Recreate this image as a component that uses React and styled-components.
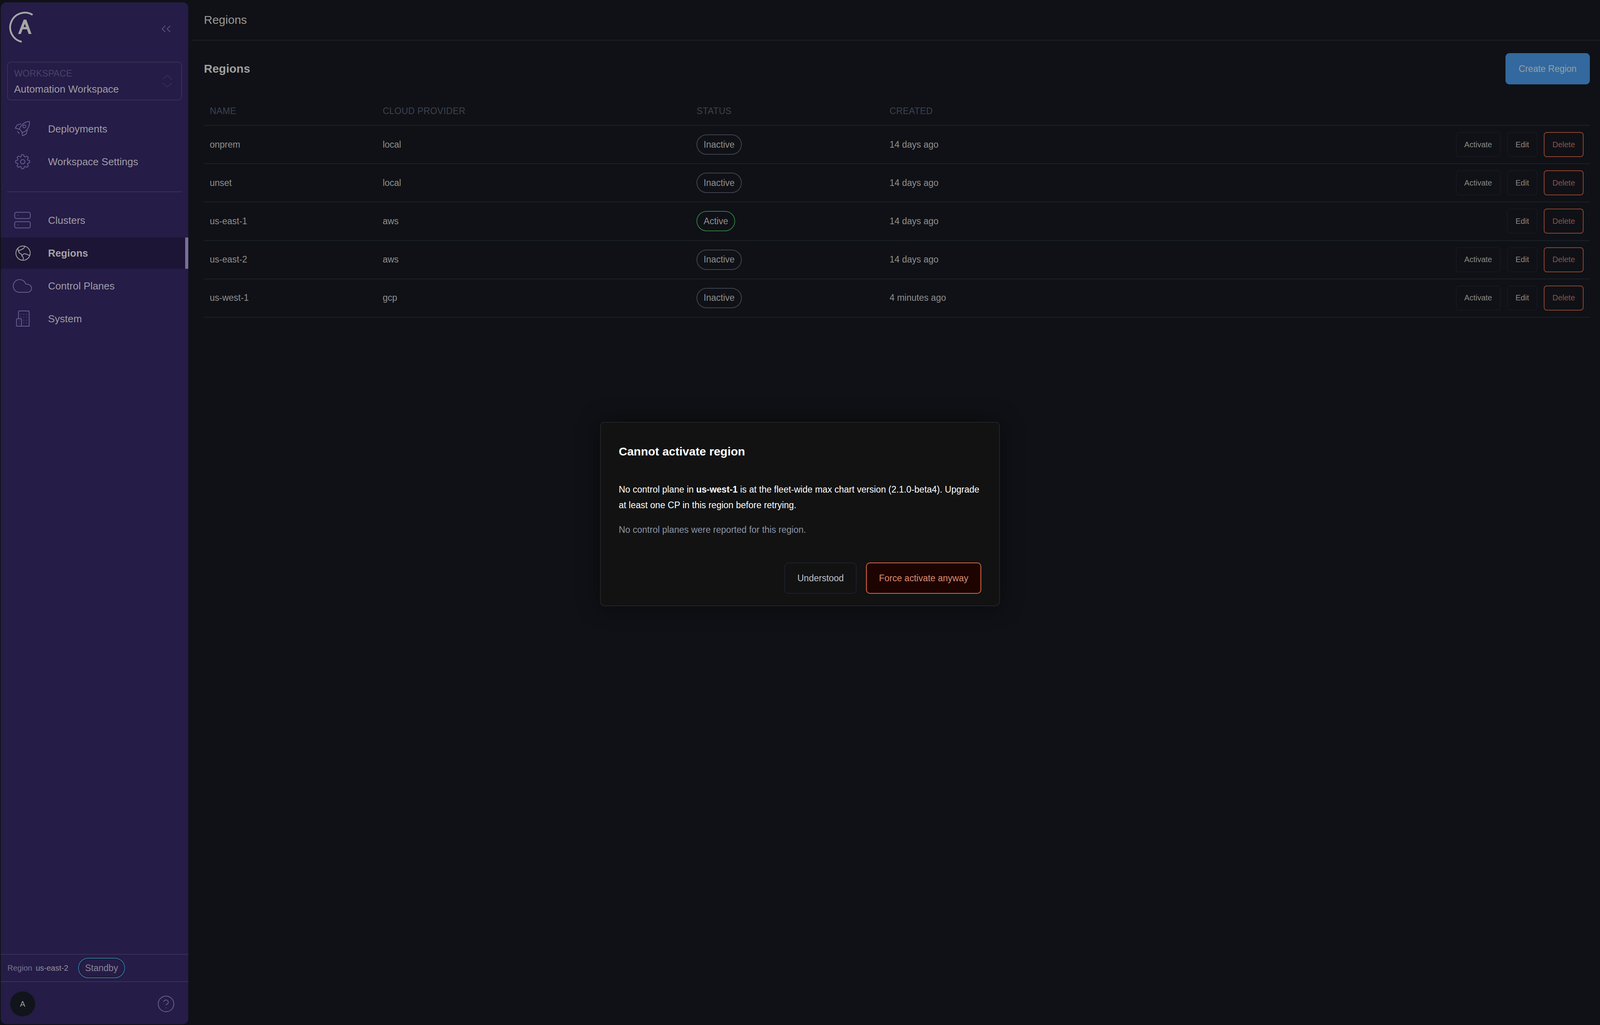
import React from 'react'
import styled, { createGlobalStyle } from 'styled-components'
import { CircleHelp } from 'lucide-react'

const GlobalStyle = createGlobalStyle`
  html, body {
    margin: 0;
    padding: 0;
    background: #0f1116;
  }
  * {
    box-sizing: border-box;
  }
  body {
    font-family: "Liberation Sans", Arial, sans-serif;
  }
`

const regions = [
  { name: 'onprem', cloud: 'local', status: 'Inactive', created: '14 days ago' },
  { name: 'unset', cloud: 'local', status: 'Inactive', created: '14 days ago' },
  { name: 'us-east-1', cloud: 'aws', status: 'Active', created: '14 days ago' },
  { name: 'us-east-2', cloud: 'aws', status: 'Inactive', created: '14 days ago' },
  { name: 'us-west-1', cloud: 'gcp', status: 'Inactive', created: '4 minutes ago' },
]

const Logo = () => (
  <LogoSvg viewBox="0 0 88 88">
    <path d="M69.3 12A37.7 37.7 0 1 0 41.5 81" fill="none" stroke="#a6a6a6" strokeWidth="4.5" />
    <path
      fill="#a6a6a6"
      fillRule="evenodd"
      d="M32.3 61L46.7 24.3H53.3L66.7 61H59.3L55 49H44L39.3 61ZM49.8 34.7L46.3 43.3H52.8Z"
    />
  </LogoSvg>
)

const RocketIcon = () => (
  <IconSvg viewBox="0 0 60 60">
    <path d="M45.5 11C36 11 27 17 21 27L20 30L26 38L29 39C38 35 46 27 45.5 11Z" />
    <path d="M23 17L14 20L9 28L20 31" />
    <path d="M40 33L37 43L27.5 47.5L26 38" />
    <circle cx="32.3" cy="23.5" r="3.7" />
    <path d="M15 37L19 41.5" />
  </IconSvg>
)

const GearIcon = () => (
  <IconSvg viewBox="0 0 60 60">
    <g transform="translate(4 6) scale(2)" strokeWidth="1">
      <path d="M10.343 3.94c.09-.542.56-.94 1.11-.94h1.093c.55 0 1.02.398 1.11.94l.149.894c.07.424.384.764.78.93.398.164.855.142 1.205-.108l.737-.527a1.125 1.125 0 0 1 1.45.12l.773.774c.39.389.44 1.002.12 1.45l-.527.737c-.25.35-.272.806-.107 1.204.165.397.505.71.93.78l.893.15c.543.09.94.559.94 1.109v1.094c0 .55-.397 1.02-.94 1.11l-.894.149c-.424.07-.764.383-.929.78-.165.398-.143.854.107 1.204l.527.738c.32.447.269 1.06-.12 1.45l-.774.773a1.125 1.125 0 0 1-1.449.12l-.738-.527c-.35-.25-.806-.272-1.203-.107-.398.165-.71.505-.781.929l-.149.894c-.09.542-.56.94-1.11.94h-1.094c-.55 0-1.019-.398-1.11-.94l-.148-.894c-.071-.424-.384-.764-.781-.93-.398-.164-.854-.142-1.204.108l-.738.527c-.447.32-1.06.269-1.45-.12l-.773-.774a1.125 1.125 0 0 1-.12-1.45l.527-.737c.25-.35.272-.806.108-1.204-.165-.397-.506-.71-.93-.78l-.894-.15c-.542-.09-.94-.56-.94-1.109v-1.094c0-.55.398-1.02.94-1.11l.894-.149c.424-.07.765-.383.93-.78.165-.398.143-.854-.108-1.204l-.526-.738a1.125 1.125 0 0 1 .12-1.45l.773-.773a1.125 1.125 0 0 1 1.45-.12l.737.527c.35.25.807.272 1.204.107.397-.165.71-.505.78-.929l.15-.894Z" />
      <circle cx="12" cy="12" r="2.8" />
    </g>
  </IconSvg>
)

const ServerIcon = () => (
  <IconSvg viewBox="0 0 60 60">
    <rect x="7.5" y="9.5" width="40" height="16" rx="4" />
    <rect x="7.5" y="33.5" width="40" height="16" rx="4" />
    <path d="M15.5 17.5h.1M15.5 41.5h.1" />
  </IconSvg>
)

const GlobeIcon = () => (
  <IconSvg viewBox="0 0 60 60" $active>
    <circle cx="29" cy="30" r="18.3" />
    <path d="M34 12.7C32 16 30 18.5 28 19.5C25 21 21 22 17.5 25C18 28 19.5 30 22 31C25 32 26 34 26 37C28 34 29.5 31.5 33 31.5C37 31.5 41 34.5 45.8 36.3" />
    <path d="M26 37C28 39 30 41 30 43C29 44.5 28.5 46 29 48" />
    <path d="M15.5 18C16 20 17 22.5 17.5 25" />
  </IconSvg>
)

const CloudIcon = () => (
  <IconSvg viewBox="0 0 60 60">
    <path d="M18 46.3H40.5A10.2 10.2 0 0 0 42 26C40 25.5 38 25.3 36 25.3A16.4 16.4 0 1 0 18 46.3Z" />
  </IconSvg>
)

const BuildingIcon = () => (
  <IconSvg viewBox="0 0 60 60">
    <path d="M17.3 30V13a3 3 0 0 1 3-3H41.7a3 3 0 0 1 3 3V49H25" />
    <path d="M12.3 49V32.5a2.5 2.5 0 0 1 2.5-2.5H22.5a2.5 2.5 0 0 1 2.5 2.5V49Z" />
    <Dots>
      {[[23.3, 19], [30.7, 19], [38, 19], [23.3, 26.3], [30.7, 26.3], [38, 26.3], [30.7, 33.7], [38, 33.7], [30.7, 40.7], [38, 40.7], [19.3, 35.7], [19.3, 42.7]].map(([x, y]) => (
        <circle key={`${x}-${y}`} cx={x} cy={y} r="1" />
      ))}
    </Dots>
  </IconSvg>
)

const topNav = [
  { label: 'Deployments', icon: <RocketIcon /> },
  { label: 'Workspace Settings', icon: <GearIcon /> },
]

const bottomNav = [
  { label: 'Clusters', icon: <ServerIcon /> },
  { label: 'Regions', icon: <GlobeIcon />, active: true },
  { label: 'Control Planes', icon: <CloudIcon /> },
  { label: 'System', icon: <BuildingIcon /> },
]

const App = () => {
  return (
    <Page>
      <GlobalStyle />
      <Sidebar>
        <SideHead>
          <Logo />
          <CollapseIcon viewBox="0 0 24 20">
            <path d="M9.3 2L1 10L9.3 18.3" />
            <path d="M22 2L13.7 10L22 18.3" />
          </CollapseIcon>
        </SideHead>

        <WorkspaceBox>
          <WorkspaceText>
            <WorkspaceLabel>WORKSPACE</WorkspaceLabel>
            <WorkspaceName>Automation Workspace</WorkspaceName>
          </WorkspaceText>
          <UpDownIcon viewBox="0 0 24 31">
            <path d="M0 11L12 0.5L24 11" />
            <path d="M0 20L12 30.5L24 20" />
          </UpDownIcon>
        </WorkspaceBox>

        <NavGroup>
          {topNav.map((item) => (
            <NavItem key={item.label}>
              {item.icon}
              {item.label}
            </NavItem>
          ))}
        </NavGroup>

        <SideDivider />

        <NavGroup>
          {bottomNav.map((item) => (
            <NavItem key={item.label} $active={item.active}>
              {item.icon}
              {item.label}
            </NavItem>
          ))}
        </NavGroup>

        <RegionStrip>
          <RegionLabel>Region</RegionLabel>
          <RegionValue>us-east-2</RegionValue>
          <StandbyBadge>Standby</StandbyBadge>
        </RegionStrip>

        <UserStrip>
          <Avatar>A</Avatar>
          <HelpButton>
            <CircleHelp size={48} strokeWidth={1} />
          </HelpButton>
        </UserStrip>
      </Sidebar>

      <Main>
        <TopBar>Regions</TopBar>
        <Content>
          <TitleRow>
            <PageTitle>Regions</PageTitle>
            <CreateButton>Create Region</CreateButton>
          </TitleRow>

          <TableHead>
            <span>NAME</span>
            <span>CLOUD PROVIDER</span>
            <span>STATUS</span>
            <span>CREATED</span>
          </TableHead>

          {regions.map((region) => (
            <TableRow key={region.name}>
              <span>{region.name}</span>
              <span>{region.cloud}</span>
              <span>
                <StatusBadge $active={region.status === 'Active'}>{region.status}</StatusBadge>
              </span>
              <CreatedCell>
                {region.created}
                <Actions>
                  {region.status !== 'Active' && <ActionButton>Activate</ActionButton>}
                  <ActionButton>Edit</ActionButton>
                  <ActionButton $danger>Delete</ActionButton>
                </Actions>
              </CreatedCell>
            </TableRow>
          ))}
        </Content>
      </Main>

      <Overlay>
        <Dialog>
          <DialogTitle>Cannot activate region</DialogTitle>
          <DialogBody>
            No control plane in <strong>us-west-1</strong> is at the fleet-wide max chart version (2.1.0-beta4). Upgrade at least one CP in this region before retrying.
          </DialogBody>
          <DialogNote>No control planes were reported for this region.</DialogNote>
          <DialogActions>
            <DialogButton>Understood</DialogButton>
            <DialogButton $danger>Force activate anyway</DialogButton>
          </DialogActions>
        </Dialog>
      </Overlay>
    </Page>
  )
}

const Page = styled.div`
  position: relative;
  display: flex;
  width: 100%;
  height: 100vh;
  overflow: hidden;
  background: #0f1116;
`

const Sidebar = styled.aside`
  display: flex;
  flex-direction: column;
  flex: 0 0 480px;
  margin: 6px 0 2px 2px;
  background: #251c47;
  border-radius: 14px;
  overflow: hidden;
`

const SideHead = styled.div`
  display: flex;
  justify-content: space-between;
  align-items: flex-start;
  padding: 20px 44px 44px 12px;
`

const LogoSvg = styled.svg`
  width: 88px;
  height: 88px;
`

const CollapseIcon = styled.svg`
  width: 24px;
  height: 20px;
  margin-top: 38px;
  fill: none;
  stroke: #5d5280;
  stroke-width: 2;
`

const WorkspaceBox = styled.div`
  display: flex;
  align-items: center;
  justify-content: space-between;
  height: 99px;
  margin: 0 16px 33px;
  padding: 0 24px 0 16px;
  border: 2px solid #3a3157;
  border-radius: 10px;
`

const WorkspaceText = styled.div`
  display: flex;
  flex-direction: column;
  gap: 10px;
`

const WorkspaceLabel = styled.span`
  font-size: 23px;
  line-height: 30px;
  letter-spacing: 0.1px;
  color: #4c4368;
`

const WorkspaceName = styled.span`
  font-size: 26px;
  line-height: 30px;
  color: #a09da6;
`

const UpDownIcon = styled.svg`
  width: 24px;
  height: 31px;
  fill: none;
  stroke: #3a3157;
  stroke-width: 2;
`

const NavGroup = styled.nav`
  display: flex;
  flex-direction: column;
  gap: 4px;
`

const NavItem = styled.div`
  position: relative;
  display: flex;
  align-items: center;
  gap: 33px;
  height: 80px;
  padding-left: 28px;
  font-size: 26px;
  font-weight: ${(p) => (p.$active ? 700 : 400)};
  color: ${(p) => (p.$active ? '#a5a3a6' : '#a09da6')};
  background: ${(p) => (p.$active ? '#1d1535' : 'transparent')};

  &::after {
    content: '';
    display: ${(p) => (p.$active ? 'block' : 'none')};
    position: absolute;
    top: 0;
    right: 0;
    bottom: 0;
    width: 8px;
    background: #7b6d9e;
  }
`

const IconSvg = styled.svg`
  flex: none;
  width: 60px;
  height: 60px;
  fill: none;
  stroke: ${(p) => (p.$active ? '#a5a3a3' : '#6b5d90')};
  stroke-width: 2;
  stroke-linecap: round;
  stroke-linejoin: round;
`

const Dots = styled.g`
  fill: #6b5d90;
  stroke: none;
`

const SideDivider = styled.div`
  flex: none;
  height: 2px;
  margin: 36px 16px 32px;
  background: #3a3157;
`

const RegionStrip = styled.div`
  display: flex;
  align-items: center;
  flex: none;
  height: 70px;
  margin-top: auto;
  padding-left: 17px;
  border-top: 2px solid #3a3157;
  font-size: 20px;
`

const RegionLabel = styled.span`
  color: #7a7390;
  margin-right: 9px;
`

const RegionValue = styled.span`
  color: #95929f;
  margin-right: 25px;
`

const StandbyBadge = styled.span`
  display: flex;
  align-items: center;
  height: 52px;
  padding: 0 16px;
  font-size: 23px;
  color: #8a8696;
  border: 2px solid #33709f;
  border-radius: 26px;
  box-shadow: inset 0 0 0 2px #161a28;
`

const UserStrip = styled.div`
  display: flex;
  align-items: center;
  justify-content: space-between;
  flex: none;
  height: 110px;
  padding: 4px 33px 0 24px;
  border-top: 2px solid #3a3157;
`

const Avatar = styled.div`
  display: flex;
  align-items: center;
  justify-content: center;
  width: 64px;
  height: 64px;
  border-radius: 50%;
  background: #11141b;
  color: #a0a0a0;
  font-size: 20px;
`

const HelpButton = styled.div`
  display: flex;
  color: #6d5f90;
`

const Main = styled.main`
  flex: 1;
  min-width: 0;
  margin-left: 8px;
`

const TopBar = styled.header`
  display: flex;
  align-items: center;
  height: 104px;
  padding-left: 32px;
  font-size: 30px;
  color: #9a9a9a;
  border-bottom: 2px solid #1b202a;
`

const Content = styled.div`
  padding: 32px 26px 0 32px;
`

const TitleRow = styled.div`
  display: flex;
  align-items: center;
  justify-content: space-between;
  margin-bottom: 32px;
`

const PageTitle = styled.h1`
  margin: 0;
  font-size: 30px;
  font-weight: 700;
  color: #a0a0a0;
`

const CreateButton = styled.button`
  width: 216px;
  height: 80px;
  border: 0;
  border-radius: 10px;
  background: #33699e;
  color: #98a0a6;
  font: inherit;
  font-size: 23px;
`

const TableHead = styled.div`
  display: grid;
  grid-template-columns: 570fr 1035fr 636fr 2288fr;
  align-items: center;
  height: 74px;
  padding: 0 16px 0 15px;
  border-bottom: 2px solid #1b202a;
  font-size: 23px;
  letter-spacing: 0.35px;
  color: #3d424f;
`

const TableRow = styled.div`
  display: grid;
  grid-template-columns: 570fr 1035fr 636fr 2288fr;
  align-items: center;
  height: 98.2px;
  padding: 0 16px 0 15px;
  border-bottom: 2px solid #1b202a;
  font-size: 23px;
  color: #8f8f8f;
`

const StatusBadge = styled.span`
  display: inline-flex;
  align-items: center;
  height: 52px;
  padding: 0 16px;
  border: 2px solid ${(p) => (p.$active ? '#2e7a3e' : '#3d4350')};
  border-radius: 26px;
`

const CreatedCell = styled.div`
  display: flex;
  align-items: center;
  justify-content: space-between;
`

const Actions = styled.div`
  display: flex;
  gap: 16px;
`

const ActionButton = styled.button`
  height: 64px;
  padding: 0 20px;
  background: transparent;
  border: 2px solid ${(p) => (p.$danger ? '#8f4230' : '#16181e')};
  border-radius: 8px;
  color: ${(p) => (p.$danger ? '#8f5245' : '#8a8a8a')};
  font: inherit;
  font-size: 20px;
`

const Overlay = styled.div`
  position: absolute;
  inset: 0;
  display: flex;
  align-items: center;
  justify-content: center;
  padding-top: 8px;
`

const Dialog = styled.div`
  display: flex;
  flex-direction: column;
  width: 1024px;
  height: 472px;
  padding: 56px 46px 30px;
  background: #121212;
  border: 2px solid #222326;
  border-radius: 12px;
  box-shadow: 0 0 60px rgba(0, 0, 0, 0.45);
`

const DialogTitle = styled.h2`
  margin: 0 0 59px;
  font-size: 30px;
  line-height: 36px;
  font-weight: 700;
  color: #ffffff;
`

const DialogBody = styled.p`
  margin: 0 0 25px;
  font-size: 23px;
  line-height: 40px;
  color: #ffffff;
`

const DialogNote = styled.p`
  margin: 0;
  font-size: 23px;
  line-height: 37px;
  color: #8a95a8;
`

const DialogActions = styled.div`
  display: flex;
  justify-content: flex-end;
  gap: 24px;
  margin-top: auto;
`

const DialogButton = styled.button`
  height: 80px;
  padding: 0 31px;
  background: ${(p) => (p.$danger ? '#1d0400' : 'transparent')};
  border: 2px solid ${(p) => (p.$danger ? '#d9654a' : '#1c2029')};
  border-radius: 10px;
  color: ${(p) => (p.$danger ? '#dd8b73' : '#c0c4cc')};
  font: inherit;
  font-size: 23px;
`

export default App
